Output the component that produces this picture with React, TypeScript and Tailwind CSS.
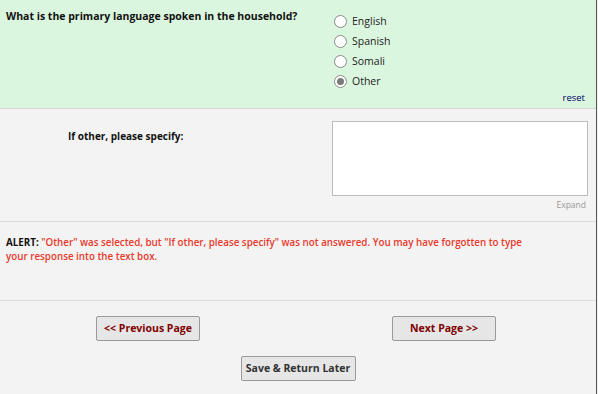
import React, { useState } from 'react';

const options = ['English', 'Spanish', 'Somali', 'Other'];

const Radio: React.FC<{ checked: boolean }> = ({ checked }) => (
  <span className="w-[13px] h-[13px] rounded-full border border-[#8a8a8a] bg-white flex items-center justify-center shrink-0">
    {checked && <span className="w-[7px] h-[7px] rounded-full bg-[#7a7a7a]"></span>}
  </span>
);

const App: React.FC = () => {
  const [selected, setSelected] = useState('Other');

  return (
    <div className="w-[598px] h-[394px] overflow-hidden flex bg-white font-['Open_Sans',sans-serif] text-[10.5px] text-black">
      <div className="w-[596px] flex flex-col bg-[#f3f3f3]">
        <div className="h-[109px] bg-[#dbf6de] border-b border-[#d6d6d6] flex">
          <div className="w-[326px] pl-[6px] pt-[8px] font-bold leading-[16px] text-[#111]">
            What is the primary language spoken in the household?
          </div>
          <div className="flex-1 flex flex-col pt-[11px] pl-[8px] pr-[11px]">
            {options.map(opt => (
              <label
                key={opt}
                className="h-[20px] flex items-center gap-[5px] cursor-pointer"
                onClick={() => setSelected(opt)}
              >
                <Radio checked={selected === opt} />
                <span className="leading-[20px] text-[#222]">{opt}</span>
              </label>
            ))}
            <div className="text-right text-[9.5px] leading-[14px] text-[#000066]">reset</div>
          </div>
        </div>

        <div className="h-[113px] border-b border-[#dcdcdc] flex">
          <div className="w-[326px] pl-[68px] pt-[19px] text-[10px] font-bold leading-[16px] text-[#111]">
            If other, please specify:
          </div>
          <div className="flex-1 flex flex-col pt-[12px] pl-[6px] pr-[8px]">
            <textarea className="h-[75px] w-full bg-white border border-[#bdbdbd] resize-none outline-none"></textarea>
            <div className="text-right text-[8.5px] leading-[14px] pt-[2px] pr-[2px] text-[#999]">Expand</div>
          </div>
        </div>

        <div className="h-[79px] border-b border-[#dcdcdc] pl-[6px] pr-[60px] pt-[14px] text-[9.8px] leading-[14px]">
          <span className="font-bold text-[#111]">ALERT: </span>
          <span className="text-[#e8392c] font-semibold">
            "Other" was selected, but "If other, please specify" was not answered. You may have forgotten to type your response into the text box.
          </span>
        </div>

        <div className="flex-1 flex flex-col items-center pt-[15px] gap-[15px]">
          <div className="w-full flex justify-between pl-[96px] pr-[100px]">
            <button className="w-[104px] h-[25px] bg-[#e6e6e6] border border-[#9a9a9a] rounded-[2px] font-bold text-[#800000] whitespace-nowrap">
              &lt;&lt; Previous Page
            </button>
            <button className="w-[104px] h-[25px] bg-[#e6e6e6] border border-[#9a9a9a] rounded-[2px] font-bold text-[#800000] whitespace-nowrap">
              Next Page &gt;&gt;
            </button>
          </div>
          <button className="w-[115px] h-[25px] bg-[#e6e6e6] border border-[#9a9a9a] rounded-[2px] font-bold text-[#333] whitespace-nowrap">
            Save &amp; Return Later
          </button>
        </div>
      </div>
      <div className="w-[1px] bg-[#555]"></div>
      <div className="w-[1px] bg-[#f0f0f0]"></div>
    </div>
  );
};

export default App;
